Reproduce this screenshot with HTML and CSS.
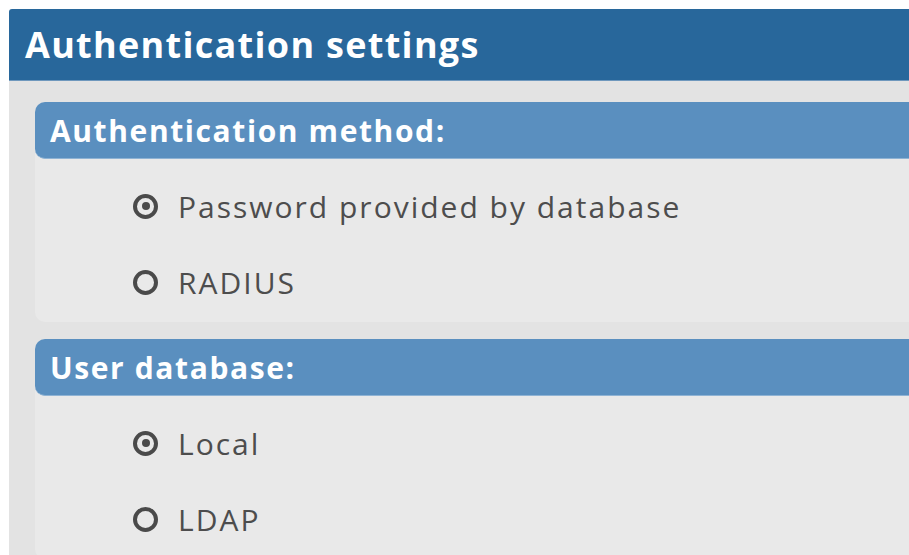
FILE: index.html
```html
<!DOCTYPE html>
<html lang="en">
<head>
<meta charset="utf-8">
<title>Authentication settings</title>
<link rel="stylesheet" href="styles.css">
</head>
<body>
  <div class="panel">
    <h1 class="panel-title">Authentication settings</h1>
    <div class="panel-body">
      <section class="group">
        <h2 class="group-title">Authentication method:</h2>
        <div class="group-body">
          <label class="option"><span class="radio checked"></span><span class="option-text">Password provided by database</span></label>
          <label class="option"><span class="radio"></span><span class="option-text">RADIUS</span></label>
        </div>
      </section>
      <section class="group">
        <h2 class="group-title">User database:</h2>
        <div class="group-body">
          <label class="option"><span class="radio checked"></span><span class="option-text">Local</span></label>
          <label class="option"><span class="radio"></span><span class="option-text">LDAP</span></label>
        </div>
      </section>
    </div>
  </div>
</body>
</html>
```
FILE: styles.css
```css
html, body {
  margin: 0;
  padding: 0;
  background: #ffffff;
  overflow: hidden;
}

body {
  padding: 9px 0 0 9px;
  font-family: "Open Sans", "DejaVu Sans", sans-serif;
}

.panel {
  display: flex;
  flex-direction: column;
}

.panel-title {
  margin: 0;
  height: 71px;
  display: flex;
  align-items: center;
  padding-left: 16px;
  background: #28679b;
  border-bottom: 1px solid #6f98bd;
  border-top-left-radius: 3px;
  color: #ffffff;
  font-size: 36px;
  font-weight: 700;
  letter-spacing: 1.3px;
}

.panel-body {
  background: #e3e3e3;
  padding: 21px 0 0 26px;
  display: flex;
  flex-direction: column;
  gap: 17px;
}

.group {
  display: flex;
  flex-direction: column;
  background: #e9e9e9;
  border-radius: 10px 0 0 10px;
}

.group-title {
  margin: 0;
  height: 56px;
  display: flex;
  align-items: center;
  padding-left: 15px;
  background: #5a8fbf;
  border-bottom: 1px solid #8fb3d4;
  border-radius: 10px 0 0 10px;
  color: #ffffff;
  font-size: 30px;
  font-weight: 700;
  letter-spacing: 1.6px;
}

.group-body {
  display: flex;
  flex-direction: column;
  padding: 9px 0 2px 98px;
}

.option {
  height: 76px;
  display: flex;
  align-items: center;
  gap: 20px;
  color: #4d4d4d;
  font-size: 30px;
  font-weight: 500;
  letter-spacing: 2px;
}

.radio {
  box-sizing: border-box;
  width: 25px;
  height: 25px;
  border: 4px solid #4a4a4a;
  border-radius: 50%;
  display: flex;
  align-items: center;
  justify-content: center;
}

.radio.checked::after {
  content: "";
  width: 8px;
  height: 8px;
  border-radius: 50%;
  background: #4a4a4a;
}
```
